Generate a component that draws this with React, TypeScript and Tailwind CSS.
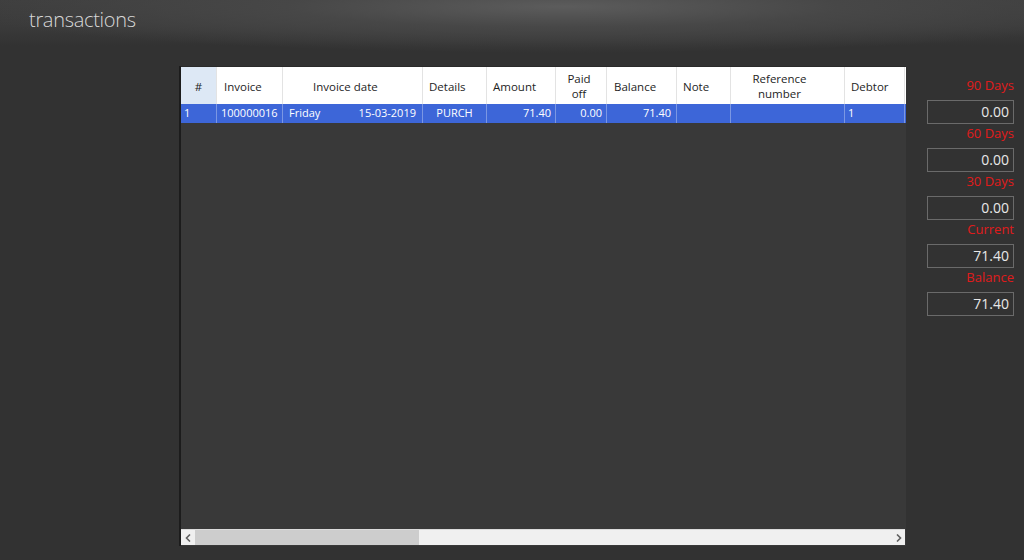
import React from "react";

type Col = { label: React.ReactNode; w: string; head: string; cell: string };

const cols: Col[] = [
  { label: "#", w: "w-[36px]", head: "justify-center bg-[#dde8f5]", cell: "pl-[3px]" },
  { label: "Invoice", w: "w-[66px]", head: "pl-[7px]", cell: "pl-[4px]" },
  { label: "Invoice date", w: "w-[140px]", head: "pl-[30px]", cell: "px-[6px] justify-between" },
  { label: "Details", w: "w-[64px]", head: "pl-[6px]", cell: "justify-center" },
  { label: "Amount", w: "w-[69px]", head: "pl-[6px]", cell: "justify-end pr-[4px]" },
  { label: <>Paid<br />off</>, w: "w-[51px]", head: "justify-center text-center pr-[4px]", cell: "justify-end pr-[4px]" },
  { label: "Balance", w: "w-[70px]", head: "pl-[7px]", cell: "justify-end pr-[5px]" },
  { label: "Note", w: "w-[54px]", head: "pl-[6px]", cell: "" },
  { label: <>Reference<br />number</>, w: "w-[114px]", head: "justify-center text-center pr-[16px]", cell: "" },
  { label: "Debtor", w: "w-[60px]", head: "pl-[6px]", cell: "pl-[3px]" },
];

const row: React.ReactNode[] = [
  "1",
  "100000016",
  <><span>Friday</span><span>15-03-2019</span></>,
  "PURCH",
  "71.40",
  "0.00",
  "71.40",
  "",
  "",
  "1",
];

const aging = [
  { label: "90 Days", value: "0.00" },
  { label: "60 Days", value: "0.00" },
  { label: "30 Days", value: "0.00" },
  { label: "Current", value: "71.40" },
  { label: "Balance", value: "71.40" },
];

export default function App() {
  return (
    <div className="w-[1024px] h-[560px] bg-[#323232] flex flex-col font-['Open_Sans','Noto_Sans',sans-serif] overflow-hidden">
      <div className="h-[66px] shrink-0 bg-[radial-gradient(ellipse_60%_70%_at_55%_10%,#5c5c5c_0%,#474747_45%,rgba(51,51,51,0)_100%),linear-gradient(to_bottom,#3e3e3e_0%,#3a3a3a_40%,#323232_70%)] pl-[29px] pt-[5px]">
        <h1 className="text-[20px] font-light text-[#d8d8d8] tracking-[-0.3px]">transactions</h1>
      </div>

      <div className="flex">
        <div className="ml-[179px] w-[727px] h-[480px] border-l-2 border-[#1c1c1c] bg-[#393939] flex flex-col">
          <div className="flex h-[38px] bg-white text-[11.5px] text-[#1e1e1e] border-t border-[#2a2a2a]">
            {cols.map((c, i) => (
              <div key={i} className={`${c.w} ${c.head} flex items-center pt-[1px] leading-[15px] border-r border-[#e3e3e3]`}>
                {c.label}
              </div>
            ))}
          </div>
          <div className="flex h-[19px] bg-[#3d66d8] text-[11px] text-white">
            {row.map((v, i) => (
              <div key={i} className={`${cols[i].w} ${cols[i].cell} flex items-center border-r border-[#7b97e3]`}>
                {v}
              </div>
            ))}
          </div>
          <div className="flex-1" />
          <div className="h-[16px] mb-[1px] flex items-center bg-[#f0f0f0] border-t border-[#dcdcdc] w-[724px]">
            <div className="w-[14px] h-full flex items-center justify-center">
              <svg width="7" height="8" viewBox="0 0 7 8">
                <path d="M5 0.5 L1.5 4 L5 7.5" fill="none" stroke="#606060" strokeWidth="1.6" />
              </svg>
            </div>
            <div className="w-[224px] h-full bg-[#cdcdcd]" />
            <div className="flex-1" />
            <div className="w-[14px] h-full flex items-center justify-center">
              <svg width="7" height="8" viewBox="0 0 7 8">
                <path d="M2 0.5 L5.5 4 L2 7.5" fill="none" stroke="#606060" strokeWidth="1.6" />
              </svg>
            </div>
          </div>
        </div>

        <div className="ml-[21px] mt-[10px] w-[87px] flex flex-col">
          {aging.map((a) => (
            <div key={a.label} className="flex flex-col">
              <div className="h-[24px] leading-[18px] text-right text-[13px] text-[#e01b1b]">{a.label}</div>
              <div className="h-[24px] border border-[#6a6a6a] text-right pr-[4px] text-[14px] leading-[22px] text-[#e8e8e8]">
                {a.value}
              </div>
            </div>
          ))}
        </div>
      </div>
    </div>
  );
}
